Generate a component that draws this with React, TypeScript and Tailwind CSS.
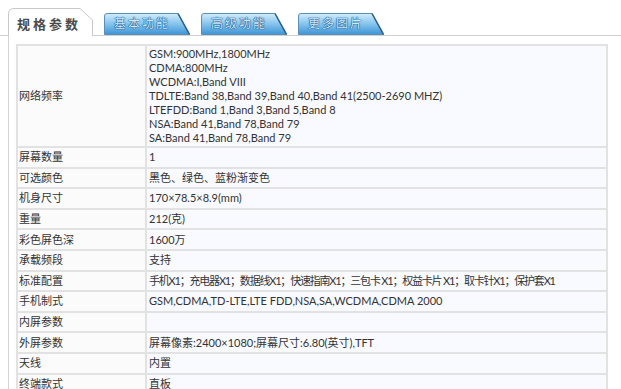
import React from "react";

const specs: { label: string; value: React.ReactNode; tight?: boolean }[] = [
  { label: "屏幕数量", value: "1" },
  { label: "可选颜色", value: "黑色、绿色、蓝粉渐变色" },
  { label: "机身尺寸", value: "170×78.5×8.9(mm)" },
  { label: "重量", value: "212(克)" },
  { label: "彩色屏色深", value: "1600万" },
  { label: "承载频段", value: "支持" },
  {
    label: "标准配置",
    value: "手机X1；充电器X1；数据线X1；快速指南X1；三包卡 X1；权益卡片 X1；取卡针X1；保护套X1",
    tight: true,
  },
  { label: "手机制式", value: "GSM,CDMA,TD-LTE,LTE FDD,NSA,SA,WCDMA,CDMA 2000" },
  { label: "内屏参数", value: "" },
  { label: "外屏参数", value: "屏幕像素:2400×1080;屏幕尺寸:6.80(英寸),TFT" },
  { label: "天线", value: "内置" },
  { label: "终端款式", value: "直板" },
];

const bands = [
  "GSM:900MHz,1800MHz",
  "CDMA:800MHz",
  "WCDMA:I,Band VIII",
  "TDLTE:Band 38,Band 39,Band 40,Band 41(2500-2690 MHZ)",
  "LTEFDD:Band 1,Band 3,Band 5,Band 8",
  "NSA:Band 41,Band 78,Band 79",
  "SA:Band 41,Band 78,Band 79",
];

function BlueTab({ label }: { label: string }) {
  return (
    <div className="relative w-[86px] h-[22px] flex items-center justify-center pr-[10px]">
      <svg className="absolute inset-0" width="86" height="22" viewBox="0 0 86 22">
        <defs>
          <linearGradient id="tabBlue" x1="0" y1="0" x2="0" y2="1">
            <stop offset="0" stopColor="#d3ecfb" />
            <stop offset="0.45" stopColor="#8cc8ee" />
            <stop offset="1" stopColor="#3d95d6" />
          </linearGradient>
        </defs>
        <path d="M0.5 21.5 V3 Q0.5 0.5 3 0.5 H74 L85.5 21.5 Z" fill="url(#tabBlue)" stroke="#5b8fb8" />
        <path d="M74 0.5 L85.5 21.5" stroke="#2c5f8a" strokeWidth="1.5" />
      </svg>
      <span className="relative text-[12px] tracking-[2px] text-[#cfeaff] [text-shadow:0_0_1px_#124f8a,0_0_1px_#124f8a,0_0_1px_#124f8a]">
        {label}
      </span>
    </div>
  );
}

export default function App() {
  return (
    <div
      className="w-[621px] h-[389px] overflow-hidden bg-white text-[#333]"
      style={{ fontFamily: 'Lato, "Noto Sans CJK SC", sans-serif' }}
    >
      {/* Tabs */}
      <div className="flex items-end gap-[11px] pl-[8px] pt-[8px] border-b border-[#cfcfcf]">
        <div className="relative w-[85px] h-[28px] -mb-px">
          <svg className="absolute inset-0" width="85" height="28" viewBox="0 0 85 28">
            <path d="M0.5 28 V6 Q0.5 0.5 6 0.5 H72 L84.5 12 V28" fill="#fff" stroke="#c9c9c9" />
          </svg>
          <span className="relative block pl-[9px] pt-[7px] text-[13px] font-bold tracking-[3px] text-[#4a4a4a]">
            规格参数
          </span>
        </div>
        <BlueTab label="基本功能" />
        <BlueTab label="高级功能" />
        <BlueTab label="更多图片" />
      </div>

      {/* Panel */}
      <div className="ml-[8px] border-l border-[#d4d4d4] pl-[7px] pt-[8px] w-[601px]">
        <table className="w-[592px] table-fixed border-collapse text-[11px] leading-[14px]">
          <colgroup>
            <col className="w-[129px]" />
            <col />
          </colgroup>
          <tbody>
            <tr className="bg-[#f8faff]">
              <td className="border-2 border-[#e2e2e2] pl-[1px] align-middle bg-[#fbfbfb]">
                网络频率
              </td>
              <td className="border-2 border-[#e2e2e2] pl-[2px] py-[1px]">
                {bands.map((b) => (
                  <div key={b} className="h-[14px] whitespace-nowrap">
                    {b}
                  </div>
                ))}
              </td>
            </tr>
            {specs.map((s) => (
              <tr key={s.label} className="h-[20.6px] bg-[#f8faff]">
                <td className="border-2 border-[#e2e2e2] pl-[1px] bg-[#fbfbfb]">{s.label}</td>
                <td
                  className={
                    s.tight
                      ? "border-2 border-[#e2e2e2] pl-[2px] whitespace-nowrap overflow-hidden tracking-[-1.2px]"
                      : "border-2 border-[#e2e2e2] pl-[2px] whitespace-nowrap overflow-hidden"
                  }
                >
                  {s.value}
                </td>
              </tr>
            ))}
          </tbody>
        </table>
      </div>
    </div>
  );
}
